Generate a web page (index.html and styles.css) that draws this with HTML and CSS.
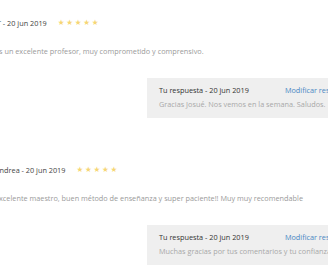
FILE: index.html
```html
<!DOCTYPE html>
<html lang="es">
<head>
    <meta charset="UTF-8">
    <title>Opiniones</title>
    <link rel="stylesheet" href="styles.css">
</head>
<body>
    <section class="reviews">
        <div class="review">
            <div class="reviewHead">
                <span class="author">JT - 20 jun 2019</span>
                <span class="stars">★★★★★</span>
            </div>
            <p class="comment">Es un excelente profesor, muy comprometido y comprensivo.</p>
            <div class="reply">
                <div class="replyHead">
                    <span class="replyTitle">Tu respuesta - 20 jun 2019</span>
                    <a class="edit" href="javascript:;">Modificar respuesta</a>
                </div>
                <p class="replyText">Gracias Josué. Nos vemos en la semana. Saludos.</p>
            </div>
        </div>
        <div class="review">
            <div class="reviewHead">
                <span class="author">Andrea - 20 jun 2019</span>
                <span class="stars">★★★★★</span>
            </div>
            <p class="comment">Excelente maestro, buen método de enseñanza y super paciente!! Muy muy recomendable</p>
            <div class="reply">
                <div class="replyHead">
                    <span class="replyTitle">Tu respuesta - 20 jun 2019</span>
                    <a class="edit" href="javascript:;">Modificar respuesta</a>
                </div>
                <p class="replyText">Muchas gracias por tus comentarios y tu confianza. Saludos.</p>
            </div>
        </div>
    </section>
</body>
</html>
```

FILE: styles.css
```css
/*reset*/
html,body{margin: 0;padding: 0;overflow: hidden;background: #fff;}
p{margin: 0;}
a{text-decoration: none;}

.reviews{
    width: 440px;
    margin-left: -5px;
    padding-top: 16px;
    font-family: "Open Sans", "Liberation Sans", sans-serif;
    font-size: 7.3px;
    line-height: 14px;
}

.review{
    margin-bottom: 45px;
}

.review .reviewHead{
    display: flex;
    align-items: center;
    color: #444;
}

.review .reviewHead .stars{
    margin-left: 11px;
    color: #f6d675;
    font-family: "DejaVu Sans", sans-serif;
    font-size: 7.5px;
    letter-spacing: 1.8px;
}

.review .comment{
    margin-top: 14px;
    color: #9a9a9a;
}

.review .reply{
    margin: 20px 0 0 152px;
    padding: 5px 12px 7px;
    background: #efefef;
}

.review .reply .replyHead{
    display: flex;
    color: #333;
}

.review .reply .edit{
    margin-left: 36px;
    color: #4a87c4;
}

.review .reply .replyText{
    color: #a8a8a8;
}
```
